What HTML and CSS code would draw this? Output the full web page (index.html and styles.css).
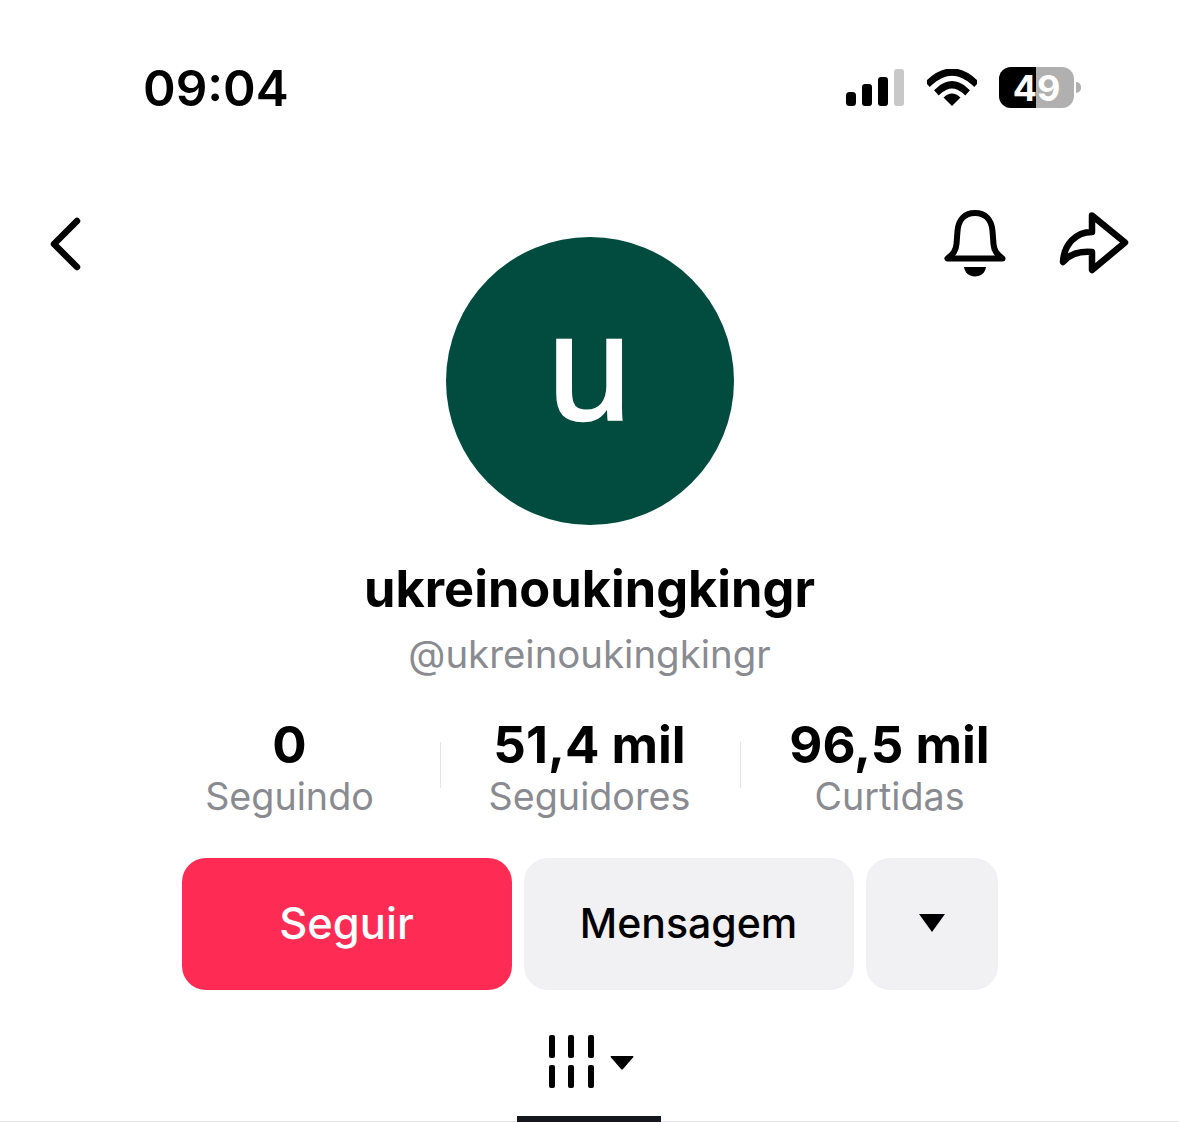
FILE: index.html
```html
<!DOCTYPE html>
<html lang="pt">
<head>
  <meta charset="UTF-8" />
  <meta name="viewport" content="width=device-width, initial-scale=1.0"/>
  <title>ukreinoukingkingr</title>
  <link rel="stylesheet" href="styles.css">
</head>
<body>
  <div class="screen">
    <div class="status">
      <span class="time">09:04</span>
      <div class="status-icons">
        <svg class="signal" width="58" height="37" viewBox="0 0 58 37">
          <rect x="0" y="23" width="10" height="14" rx="3.5" fill="#000"/>
          <rect x="16" y="15" width="10" height="22" rx="3" fill="#000"/>
          <rect x="32" y="8" width="10" height="29" rx="3" fill="#000"/>
          <rect x="48" y="0" width="10" height="37" rx="3" fill="#c8c8c8"/>
        </svg>
        <svg class="wifi" width="50" height="37" viewBox="0 0 50 37">
          <path d="M3 13 Q25 -7 47 13" fill="none" stroke="#000" stroke-width="7" stroke-linecap="square"/>
          <path d="M12 21.5 Q25 10 38 21.5" fill="none" stroke="#000" stroke-width="7" stroke-linecap="square"/>
          <path d="M16.5 28.5 Q25 20.5 33.5 28.5 L25 37 Z" fill="#000"/>
        </svg>
        <div class="battery">
          <div class="battery-body">
            <span class="battery-fill"></span>
            <span class="battery-num">49</span>
          </div>
          <span class="battery-cap"></span>
        </div>
      </div>
    </div>

    <div class="top">
      <div class="top-left">
        <svg width="32" height="54" viewBox="0 0 32 54">
          <path d="M28 4 L5 27 L28 50" fill="none" stroke="#000" stroke-width="6.5" stroke-linecap="round" stroke-linejoin="round"/>
        </svg>
      </div>
      <div class="avatar">u</div>
      <div class="top-right">
        <svg width="62" height="68" viewBox="0 0 62 68">
          <path d="M3.5 48.5 H58.5 C53 44 50 41 49.5 34 L48.5 21 C47.5 9 41 3 31 3 C21 3 14.5 9 13.5 21 L12.5 34 C12 41 9 44 3.5 48.5 Z" fill="none" stroke="#000" stroke-width="6" stroke-linejoin="round" stroke-linecap="round"/>
          <path d="M20 57 H42 C41 63 37 66.5 31 66.5 C25 66.5 21 63 20 57 Z" fill="#000"/>
        </svg>
        <svg width="70" height="64" viewBox="0 0 70 64">
          <path d="M33 5.5 L66 32.500 L33 60 V42 C20 41 10 45 4 52 C5 34 17 22 33 22 Z" fill="none" stroke="#000" stroke-width="6.5" stroke-linejoin="round" stroke-linecap="round"/>
        </svg>
      </div>
    </div>

    <div class="name">ukreinoukingkingr</div>
    <div class="handle">@ukreinoukingkingr</div>

    <div class="stats">
      <div class="stat">
        <div class="stat-num">0</div>
        <div class="stat-label">Seguindo</div>
      </div>
      <div class="stat">
        <div class="stat-num">51,4 mil</div>
        <div class="stat-label">Seguidores</div>
      </div>
      <div class="stat">
        <div class="stat-num">96,5 mil</div>
        <div class="stat-label">Curtidas</div>
      </div>
    </div>

    <div class="actions">
      <button class="btn btn-follow">Seguir</button>
      <button class="btn btn-msg">Mensagem</button>
      <button class="btn btn-more"><span class="caret"></span></button>
    </div>

    <div class="tabs">
      <div class="tab">
        <svg width="88" height="54" viewBox="0 0 88 54">
          <g fill="#000">
            <rect x="1" y="1" width="6" height="23" rx="2"/>
            <rect x="20" y="1" width="6" height="23" rx="2"/>
            <rect x="40" y="1" width="6" height="23" rx="2"/>
            <rect x="1" y="31" width="6" height="23" rx="2"/>
            <rect x="20" y="31" width="6" height="23" rx="2"/>
            <rect x="40" y="31" width="6" height="23" rx="2"/>
            <path d="M63 22 H85 Q86 22 85 23.5 L75 35 Q74 36 73 35 L63 23.5 Q62 22 63 22 Z"/>
          </g>
        </svg>
      </div>
    </div>
  </div>
</body>
</html>
```

FILE: styles.css
```css
* {
  box-sizing: border-box;
}

body {
  margin: 0;
  background-color: #fff;
  color: #000;
  font-family: Inter, "Liberation Sans", sans-serif;
}

.screen {
  height: 1122px;
  overflow: hidden;
}

/* status bar */
.status {
  height: 175px;
  padding: 0 98px 0 143px;
  display: flex;
  align-items: center;
  justify-content: space-between;
}

.time {
  font-size: 49.5px;
  font-weight: 600;
}

.status-icons {
  display: flex;
  align-items: center;
}

.wifi {
  margin-left: 23px;
}

.battery {
  margin-left: 22px;
  display: flex;
  align-items: center;
  gap: 2px;
}

.battery-body {
  width: 75px;
  height: 41px;
  border-radius: 12px;
  background-color: #b0b0b0;
  overflow: hidden;
  position: relative;
  display: flex;
  align-items: center;
  justify-content: center;
}

.battery-fill {
  position: absolute;
  left: 0;
  top: 0;
  bottom: 0;
  width: 37px;
  background-color: #000;
}

.battery-num {
  position: relative;
  color: #fff;
  font-size: 36px;
  font-weight: 700;
}

.battery-cap {
  width: 5px;
  height: 11px;
  border-radius: 0 6px 6px 0;
  background-color: #b0b0b0;
}

/* back, avatar, bell and share */
.top {
  padding-top: 35px;
  display: grid;
  grid-template-columns: 1fr 288px 1fr;
}

.top-left {
  padding: 7px 0 0 49px;
}

.top-right {
  display: flex;
  justify-content: flex-end;
  align-items: flex-start;
  gap: 53px;
  padding-right: 50px;
}

.avatar {
  margin-top: 27px;
  width: 288px;
  height: 288px;
  border-radius: 50%;
  background-color: #014c3f;
  color: #fff;
  font-family: "Liberation Sans", sans-serif;
  font-size: 150px;
  line-height: 262px;
  text-align: center;
  -webkit-text-stroke: 2.5px #fff;
}

.name {
  margin-top: 32px;
  font-size: 50.5px;
  font-weight: 700;
  line-height: 64px;
  text-align: center;
}

.handle {
  margin-top: 8px;
  font-size: 38.4px;
  line-height: 50px;
  color: #8a8b91;
  text-align: center;
}

/* counters */
.stats {
  margin: 37px auto 0;
  width: 900px;
  display: grid;
  grid-template-columns: repeat(3, 1fr);
}

.stat {
  text-align: center;
  position: relative;
}

.stat + .stat::before {
  content: "";
  position: absolute;
  left: 0;
  top: 26px;
  height: 46px;
  width: 1px;
  background-color: #e4e4e6;
}

.stat-num {
  font-size: 51px;
  font-weight: 700;
  line-height: 57px;
}

.stat-label {
  font-size: 37.7px;
  line-height: 46px;
  color: #8a8b91;
}

/* buttons */
.actions {
  margin-top: 39px;
  display: flex;
  justify-content: center;
  gap: 12px;
}

.btn {
  height: 132px;
  padding: 0 0 2px;
  border: none;
  border-radius: 24px;
  font-family: inherit;
  font-size: 41px;
  font-weight: 500;
  cursor: pointer;
}

.btn-follow {
  width: 330px;
  background-color: #fe2c55;
  color: #fff;
  font-size: 43.5px;
}

.btn-msg {
  width: 330px;
  background-color: #f1f1f3;
  color: #000;
}

.btn-more {
  width: 132px;
  background-color: #f1f1f3;
}

.caret {
  display: block;
  width: 0;
  margin: 0 auto;
  border-left: 13px solid transparent;
  border-right: 13px solid transparent;
  border-top: 18px solid #000;
}

/* tab row */
.tabs {
  display: flex;
  justify-content: center;
  border-bottom: 1px solid #e4e4e6;
  height: 132px;
}

.tab {
  width: 144px;
  height: 132px;
  margin-right: 1px;
  padding-top: 44px;
  border-bottom: 6px solid #16161e;
  display: flex;
  justify-content: center;
  align-items: flex-start;
}

.tab svg {
  margin-left: 6px;
}
```
